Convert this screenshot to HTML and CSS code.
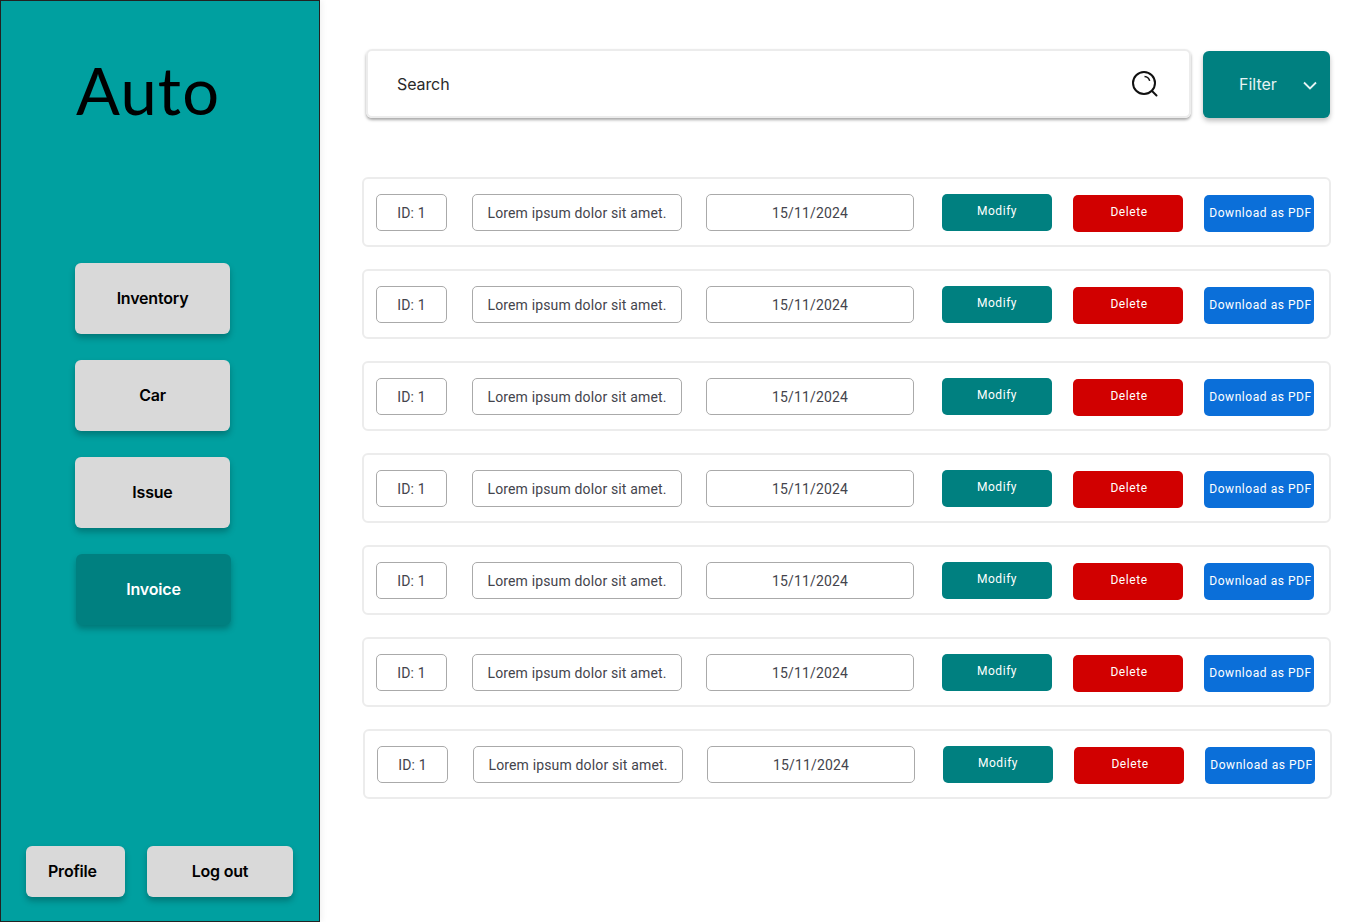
FILE: index.html
```html
<!DOCTYPE html>
<html lang="en">
<head>
  <meta charset="UTF-8">
  <meta name="viewport" content="width=device-width, initial-scale=1.0">
  <title>Auto</title>
  <link rel="stylesheet" href="styles.css">
</head>
<body>
  <div class="page">
    <aside class="sidebar">
      <h1 class="logo">Auto</h1>
      <nav class="nav">
        <a class="nav-btn" href="#">Inventory</a>
        <a class="nav-btn" href="#">Car</a>
        <a class="nav-btn" href="#">Issue</a>
        <a class="nav-btn active" href="#">Invoice</a>
      </nav>
      <div class="account">
        <a class="account-btn profile" href="#">Profile</a>
        <a class="account-btn logout" href="#">Log out</a>
      </div>
    </aside>

    <main class="content">
      <div class="toolbar">
        <div class="search">
          <span>Search</span>
          <svg class="search-icon" width="28" height="28" viewBox="0 0 28 28" fill="none" stroke="#111" stroke-width="2">
            <circle cx="13" cy="13" r="11"/>
            <path d="M13.500 6.500c2.600.2 4.600 2 5.200 4.400" stroke-width="1.500"/>
            <path d="M21 21l4.500 4.500" stroke-linecap="round"/>
          </svg>
        </div>
        <button class="filter">
          <span>Filter</span>
          <svg class="chevron" width="14" height="9" viewBox="0 0 14 9" fill="none" stroke="#e6f3f3" stroke-width="1.800">
            <path d="M1 1.500l6 6 6-6"/>
          </svg>
        </button>
      </div>

      <ul class="rows">
        <li class="row">
          <span class="field id">ID: 1</span>
          <span class="field title">Lorem ipsum dolor sit amet.</span>
          <span class="field date">15/11/2024</span>
          <a class="action modify" href="#">Modify</a>
          <a class="action delete" href="#">Delete</a>
          <a class="action pdf" href="#">Download as PDF</a>
        </li>
        <li class="row">
          <span class="field id">ID: 1</span>
          <span class="field title">Lorem ipsum dolor sit amet.</span>
          <span class="field date">15/11/2024</span>
          <a class="action modify" href="#">Modify</a>
          <a class="action delete" href="#">Delete</a>
          <a class="action pdf" href="#">Download as PDF</a>
        </li>
        <li class="row">
          <span class="field id">ID: 1</span>
          <span class="field title">Lorem ipsum dolor sit amet.</span>
          <span class="field date">15/11/2024</span>
          <a class="action modify" href="#">Modify</a>
          <a class="action delete" href="#">Delete</a>
          <a class="action pdf" href="#">Download as PDF</a>
        </li>
        <li class="row">
          <span class="field id">ID: 1</span>
          <span class="field title">Lorem ipsum dolor sit amet.</span>
          <span class="field date">15/11/2024</span>
          <a class="action modify" href="#">Modify</a>
          <a class="action delete" href="#">Delete</a>
          <a class="action pdf" href="#">Download as PDF</a>
        </li>
        <li class="row">
          <span class="field id">ID: 1</span>
          <span class="field title">Lorem ipsum dolor sit amet.</span>
          <span class="field date">15/11/2024</span>
          <a class="action modify" href="#">Modify</a>
          <a class="action delete" href="#">Delete</a>
          <a class="action pdf" href="#">Download as PDF</a>
        </li>
        <li class="row">
          <span class="field id">ID: 1</span>
          <span class="field title">Lorem ipsum dolor sit amet.</span>
          <span class="field date">15/11/2024</span>
          <a class="action modify" href="#">Modify</a>
          <a class="action delete" href="#">Delete</a>
          <a class="action pdf" href="#">Download as PDF</a>
        </li>
        <li class="row last">
          <span class="field id">ID: 1</span>
          <span class="field title">Lorem ipsum dolor sit amet.</span>
          <span class="field date">15/11/2024</span>
          <a class="action modify" href="#">Modify</a>
          <a class="action delete" href="#">Delete</a>
          <a class="action pdf" href="#">Download as PDF</a>
        </li>
      </ul>
    </main>
  </div>
</body>
</html>
```

FILE: styles.css
```css
* {
  padding: 0;
  margin: 0;
  box-sizing: border-box;
}
html,
body {
  height: 100%;
  background-color: #fff;
}
body {
  font-family: "Inter", "Liberation Sans", sans-serif;
  overflow: hidden;
}
a {
  text-decoration: none;
}
.page {
  display: flex;
  height: 922px;
}

/* sidebar */
.sidebar {
  display: flex;
  flex-direction: column;
  flex: none;
  width: 320px;
  height: 100%;
  padding: 0 0 24px 25px;
  border: 1px solid #222;
  background-color: #00a0a0;
  box-shadow: 2px 0 6px rgba(0, 0, 0, 0.06);
}
.logo {
  margin: 49px 0 0 50px;
  height: 83px;
  font-family: "Lato", sans-serif;
  font-size: 65px;
  line-height: 80px;
  font-weight: 400;
  letter-spacing: 1.2px;
  color: #000;
}
.nav {
  display: flex;
  flex-direction: column;
  align-items: flex-start;
  gap: 26px;
  margin: 130px 0 0 49px;
}
.nav-btn {
  display: flex;
  justify-content: center;
  align-items: center;
  width: 155px;
  height: 71px;
  padding-bottom: 2px;
  border-radius: 6px;
  background-color: #d9d9d9;
  box-shadow: 0 4px 6px rgba(0, 0, 0, 0.25);
  font-size: 16px;
  font-weight: 600;
  letter-spacing: -0.2px;
  color: #000;
}
.nav-btn.active {
  margin-left: 1px;
  background-color: #008080;
  color: #fff;
}
.account {
  display: flex;
  gap: 22px;
  margin-top: auto;
}
.account-btn {
  display: flex;
  align-items: center;
  height: 51px;
  padding-bottom: 2px;
  border-radius: 6px;
  background-color: #d9d9d9;
  box-shadow: 0 4px 6px rgba(0, 0, 0, 0.25);
  font-size: 16px;
  font-weight: 600;
  letter-spacing: -0.2px;
  color: #000;
}
.profile {
  width: 99px;
  padding-left: 22px;
}
.logout {
  width: 146px;
  justify-content: center;
}

/* main */
.content {
  flex: 1;
  padding: 49px 0 0 42px;
}
.toolbar {
  display: flex;
  align-items: flex-start;
  gap: 12px;
  margin-left: 4px;
}
.search {
  display: flex;
  justify-content: space-between;
  align-items: center;
  width: 825px;
  height: 69px;
  padding: 1px 30px 0 29px;
  border: 2px solid #ececec;
  border-radius: 6px;
  box-shadow: 0 2px 3px rgba(0, 0, 0, 0.35);
  font-size: 16px;
  letter-spacing: -0.1px;
  color: #2a2a2a;
}
.search-icon {
  flex: none;
}
.filter {
  display: flex;
  align-items: center;
  width: 127px;
  height: 67px;
  margin-top: 2px;
  padding: 0 0 2px 36px;
  border: none;
  border-radius: 6px;
  background-color: #008080;
  box-shadow: 0 3px 5px rgba(0, 0, 0, 0.25);
  font-family: inherit;
  font-size: 16px;
  color: #e6f3f3;
}
.chevron {
  margin: 4px 0 0 26px;
}
.rows {
  display: flex;
  flex-direction: column;
  gap: 22px;
  margin-top: 59px;
  list-style: none;
}
.row {
  display: flex;
  align-items: flex-start;
  width: 969px;
  height: 70px;
  padding: 15px 12px;
  border: 2px solid #ececec;
  border-radius: 6px;
  font-family: "Roboto", sans-serif;
}
.row.last {
  margin-left: 1px;
}
.field {
  display: flex;
  justify-content: center;
  align-items: center;
  height: 37px;
  border: 1px solid #aaa;
  border-radius: 5px;
  font-size: 14px;
  letter-spacing: 0.15px;
  color: #44444c;
}
.id {
  width: 71px;
}
.title {
  width: 210px;
  margin-left: 25px;
}
.date {
  width: 208px;
  margin-left: 24px;
}
.action {
  display: flex;
  justify-content: center;
  align-items: center;
  width: 110px;
  height: 37px;
  border-radius: 5px;
  font-size: 12px;
  font-weight: 400;
  letter-spacing: 0.55px;
  color: #fff;
}
.modify {
  margin-left: 28px;
  padding-bottom: 3px;
  background-color: #008080;
}
.delete {
  margin: 1px 0 0 21px;
  padding: 0 0 3px 2px;
  background-color: #d10000;
}
.pdf {
  margin: 1px 0 0 21px;
  padding: 0 0 1px 3px;
  background-color: #0b6fd9;
  white-space: nowrap;
}
```
